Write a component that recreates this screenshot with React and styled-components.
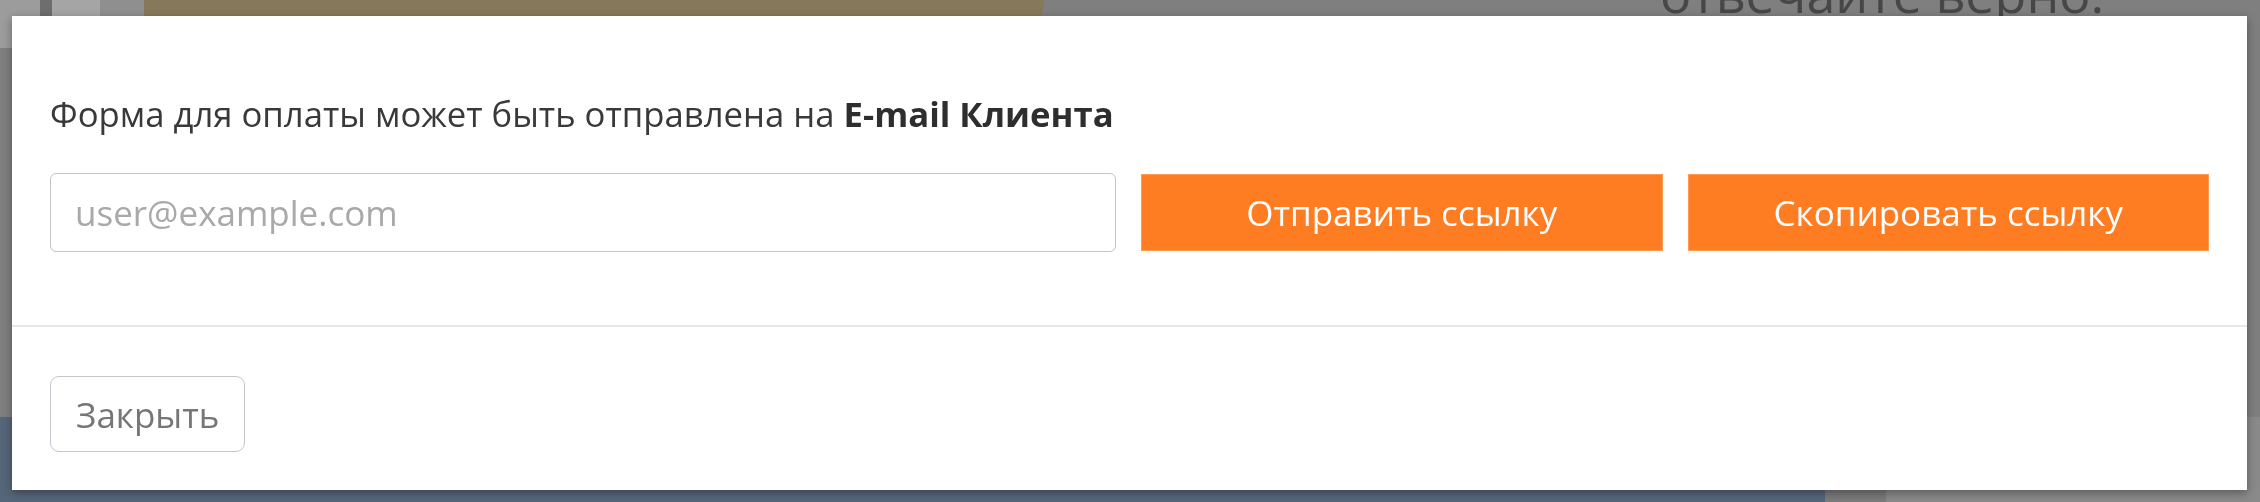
import React from "react";
import styled, { createGlobalStyle } from "styled-components";

const GlobalStyle = createGlobalStyle`
  html, body {
    margin: 0;
    padding: 0;
    background: #7f7f7f;
  }
  * {
    box-sizing: border-box;
  }
  body {
    font-family: "Open Sans", "Noto Sans", "Liberation Sans", sans-serif;
  }
`;

// ============ page behind the modal (already dimmed) ============

const Page = styled.div`
  width: 2260px;
  height: 502px;
  overflow: hidden;
  display: flex;
  flex-direction: column;
  background: #7f7f7f;
`;

const Hero = styled.div`
  height: 48px;
  display: flex;
  align-items: flex-start;
`;

const Photo = styled.div`
  width: 144px;
  height: 100%;
  background: linear-gradient(90deg, #9c9c9c 0 40px, #6e6e6e 40px 52px, #a5a5a5 52px 100px, #8f8f8f 100px);
`;

const Banner = styled.div`
  width: 900px;
  height: 100%;
  background: #86795b;
  border-bottom-right-radius: 60px;
`;

const Slogan = styled.h1`
  margin: -33px 0 0 616px;
  font-size: 52px;
  line-height: 1;
  font-weight: 400;
  color: #474747;
  white-space: nowrap;
`;

const Filler = styled.div`
  flex: 1;
`;

const PageFooter = styled.div`
  height: 85px;
  display: flex;
`;

const FooterBand = styled.div`
  width: ${(p) => p.$width}px;
  background: ${(p) => p.$color};
`;

// ============ modal ============

const Dialog = styled.div`
  position: fixed;
  top: 16px;
  left: 12px;
  right: 13px;
  height: 474px;
  background: #ffffff;
  box-shadow: 0 3px 9px rgba(0, 0, 0, 0.35);
  display: flex;
  flex-direction: column;
`;

const Body = styled.div`
  padding: 75px 38px 73px;
  border-bottom: 2px solid #e6e6e6;
`;

const Lead = styled.p`
  margin: 0 0 37px;
  font-size: 34.7px;
  line-height: 45px;
  color: #393939;
  b {
    font-weight: 700;
    color: #2e2e2e;
  }
`;

const SendRow = styled.div`
  display: grid;
  grid-template-columns: 1066px 1fr 1fr;
  column-gap: 25px;
  align-items: center;
`;

const EmailInput = styled.input`
  height: 79px;
  width: 100%;
  padding: 0 24px;
  border: 1px solid #c4c4c4;
  border-radius: 6px;
  font-family: inherit;
  font-size: 35px;
  color: #333;
  outline: none;
  &::placeholder {
    color: #a9a9a9;
  }
`;

const OrangeButton = styled.button`
  height: 77px;
  border: 1px solid #ff9a52;
  border-radius: 0;
  background: #fe7c22;
  color: #ffffff;
  font-family: inherit;
  font-size: 35px;
  cursor: pointer;
`;

const Footer = styled.div`
  flex: 1;
  padding: 49px 38px 0;
`;

const CloseButton = styled.button`
  height: 76px;
  padding: 0 25px;
  background: #ffffff;
  border: 1px solid #c3c7cd;
  border-radius: 9px;
  color: #767676;
  font-family: inherit;
  font-size: 35px;
  cursor: pointer;
`;

export default function App() {
  return (
    <>
      <GlobalStyle />
      <Page>
        <Hero>
          <Photo />
          <Banner />
          <Slogan>отвечайте верно.</Slogan>
        </Hero>
        <Filler />
        <PageFooter>
          <FooterBand $width={1825} $color="#56667a" />
          <FooterBand $width={61} $color="#7b7b7b" />
          <FooterBand $width={374} $color="#8a8a8a" />
        </PageFooter>
      </Page>

      <Dialog>
        <Body>
          <Lead>
            Форма для оплаты может быть отправлена на <b>E-mail Клиента</b>
          </Lead>
          <SendRow>
            <EmailInput type="email" placeholder="user@example.com" />
            <OrangeButton>Отправить ссылку</OrangeButton>
            <OrangeButton>Скопировать ссылку</OrangeButton>
          </SendRow>
        </Body>
        <Footer>
          <CloseButton>Закрыть</CloseButton>
        </Footer>
      </Dialog>
    </>
  );
}
